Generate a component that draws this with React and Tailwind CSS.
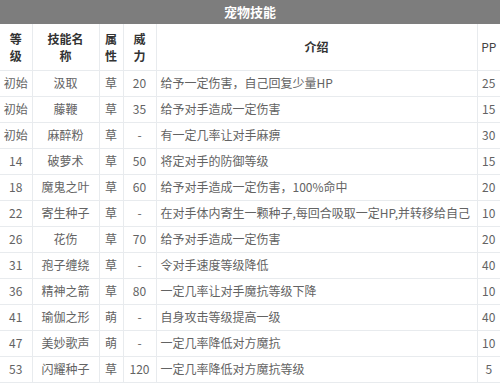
import React from 'react';

const skills = [
  ['初始', '汲取', '草', '20', '给予一定伤害，自己回复少量HP', '25'],
  ['初始', '藤鞭', '草', '35', '给予对手造成一定伤害', '15'],
  ['初始', '麻醉粉', '草', '-', '有一定几率让对手麻痹', '30'],
  ['14', '破萝术', '草', '50', '将定对手的防御等级', '15'],
  ['18', '魔鬼之叶', '草', '60', '给予对手造成一定伤害，100%命中', '20'],
  ['22', '寄生种子', '草', '-', '在对手体内寄生一颗种子,每回合吸取一定HP,并转移给自己', '10'],
  ['26', '花伤', '草', '70', '给予对手造成一定伤害', '20'],
  ['31', '孢子缠绕', '草', '-', '令对手速度等级降低', '40'],
  ['36', '精神之箭', '草', '80', '一定几率让对手魔抗等级下降', '10'],
  ['41', '瑜伽之形', '萌', '-', '自身攻击等级提高一级', '40'],
  ['47', '美妙歌声', '萌', '-', '一定几率降低对方魔抗', '10'],
  ['53', '闪耀种子', '草', '120', '一定几率降低对方魔抗等级', '5'],
];

const cell = 'border-b border-r border-[#e8ebee] p-0';

export default function App() {
  return (
    <div className="w-[500px] h-[384px] overflow-hidden bg-white text-[12px] text-[#636363] font-['Noto_Sans_CJK_SC',sans-serif]">
      <div className="h-[24px] bg-[#7d7d7d] text-white font-bold text-[13px] flex items-center justify-center">
        宠物技能
      </div>
      <table className="w-[500px] table-fixed border-collapse">
        <colgroup>
          <col className="w-[32px]" />
          <col className="w-[67px]" />
          <col className="w-[24px]" />
          <col className="w-[33px]" />
          <col className="w-[321px]" />
          <col className="w-[23px]" />
        </colgroup>
        <thead>
          <tr className="h-[46px] text-[#333] font-bold leading-[17px]">
            <th className={cell}>等<br />级</th>
            <th className={cell}>技能名<br />称</th>
            <th className={cell}>属<br />性</th>
            <th className={cell}>威<br />力</th>
            <th className={cell}>介绍</th>
            <th className="border-b border-[#e8ebee] p-0 font-normal text-[#444]">PP</th>
          </tr>
        </thead>
        <tbody>
          {skills.map((s, i) => (
            <tr key={i} className="h-[26px]">
              <td className={`${cell} text-center`}>{s[0]}</td>
              <td className={`${cell} text-center`}>{s[1]}</td>
              <td className={`${cell} text-center`}>{s[2]}</td>
              <td className={`${cell} text-center`}>{s[3]}</td>
              <td className={`${cell} pl-[4px] whitespace-nowrap overflow-hidden`}>{s[4]}</td>
              <td className="border-b border-[#e8ebee] p-0 text-center">{s[5]}</td>
            </tr>
          ))}
        </tbody>
      </table>
    </div>
  );
}
